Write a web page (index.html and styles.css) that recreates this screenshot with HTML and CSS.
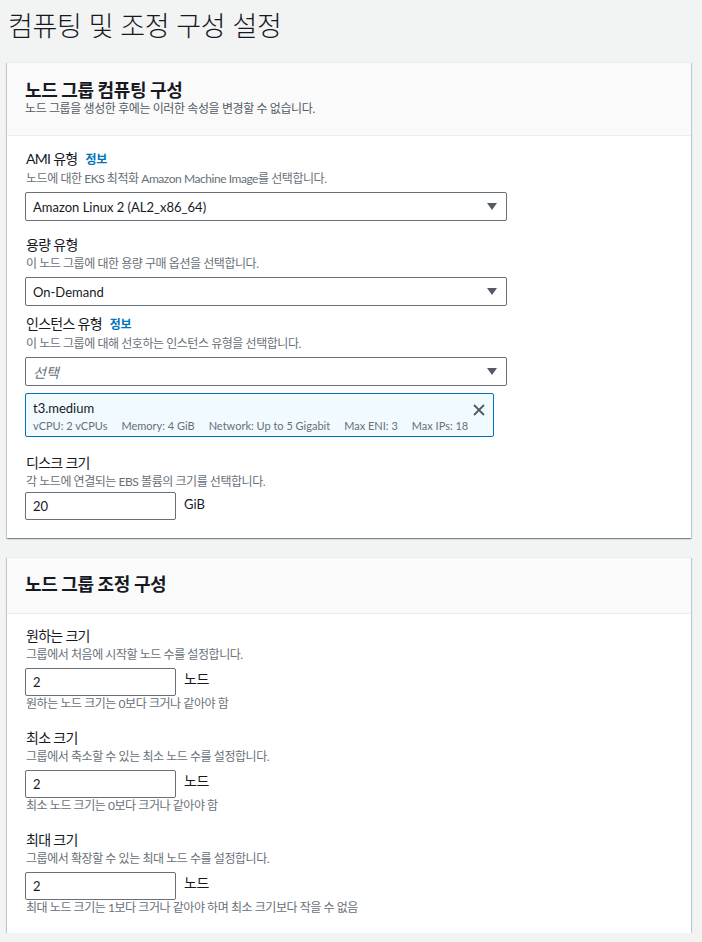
FILE: index.html
```html
<!DOCTYPE html>
<html lang="ko">
<head>
    <meta charset="UTF-8">
    <meta name="viewport" content="width=device-width, initial-scale=1.0">
    <title>컴퓨팅 및 조정 구성 설정</title>
    <link rel="stylesheet" href="styles.css">
</head>
<body>

<div class="page">
    <h1 class="page-title">컴퓨팅 및 조정 구성 설정</h1>

    <!-- Node group compute configuration -->
    <section class="card">
        <div class="card-header">
            <h2>노드 그룹 컴퓨팅 구성</h2>
            <p>노드 그룹을 생성한 후에는 이러한 속성을 변경할 수 없습니다.</p>
        </div>
        <div class="card-body">
            <div class="field">
                <div class="field-label">AMI 유형 <a class="info" href="#">정보</a></div>
                <div class="field-desc">노드에 대한 EKS 최적화 Amazon Machine Image를 선택합니다.</div>
                <div class="select">
                    <span class="select-value">Amazon Linux 2 (AL2_x86_64)</span>
                    <svg class="caret" width="10" height="7" viewBox="0 0 10 7"><path d="M0 0h10L5 7z"/></svg>
                </div>
            </div>

            <div class="field field-capacity">
                <div class="field-label">용량 유형</div>
                <div class="field-desc">이 노드 그룹에 대한 용량 구매 옵션을 선택합니다.</div>
                <div class="select">
                    <span class="select-value">On-Demand</span>
                    <svg class="caret" width="10" height="7" viewBox="0 0 10 7"><path d="M0 0h10L5 7z"/></svg>
                </div>
            </div>

            <div class="field field-instance">
                <div class="field-label">인스턴스 유형 <a class="info" href="#">정보</a></div>
                <div class="field-desc">이 노드 그룹에 대해 선호하는 인스턴스 유형을 선택합니다.</div>
                <div class="select">
                    <span class="select-placeholder">선택</span>
                    <svg class="caret" width="10" height="7" viewBox="0 0 10 7"><path d="M0 0h10L5 7z"/></svg>
                </div>
                <div class="token">
                    <div class="token-main">
                        <div class="token-title">t3.medium</div>
                        <div class="token-tags">
                            <span>vCPU: 2 vCPUs</span>
                            <span>Memory: 4 GiB</span>
                            <span>Network: Up to 5 Gigabit</span>
                            <span>Max ENI: 3</span>
                            <span>Max IPs: 18</span>
                        </div>
                    </div>
                    <svg class="token-close" width="12" height="12" viewBox="0 0 12 12"><path d="M1 1l10 10M11 1L1 11"/></svg>
                </div>
            </div>

            <div class="field field-disk">
                <div class="field-label">디스크 크기</div>
                <div class="field-desc">각 노드에 연결되는 EBS 볼륨의 크기를 선택합니다.</div>
                <div class="input-row input-row-disk">
                    <input class="text-input" type="text" value="20">
                    <span class="unit unit-disk">GiB</span>
                </div>
            </div>
        </div>
    </section>

    <!-- Node group scaling configuration -->
    <section class="card card-scaling">
        <div class="card-header card-header-scaling">
            <h2>노드 그룹 조정 구성</h2>
        </div>
        <div class="card-body card-body-scaling">
            <div class="field">
                <div class="field-label">원하는 크기</div>
                <div class="field-desc">그룹에서 처음에 시작할 노드 수를 설정합니다.</div>
                <div class="input-row">
                    <input class="text-input" type="text" value="2">
                    <span class="unit">노드</span>
                </div>
                <div class="field-hint">원하는 노드 크기는 0보다 크거나 같아야 함</div>
            </div>

            <div class="field field-scale">
                <div class="field-label">최소 크기</div>
                <div class="field-desc">그룹에서 축소할 수 있는 최소 노드 수를 설정합니다.</div>
                <div class="input-row">
                    <input class="text-input" type="text" value="2">
                    <span class="unit">노드</span>
                </div>
                <div class="field-hint">최소 노드 크기는 0보다 크거나 같아야 함</div>
            </div>

            <div class="field field-scale">
                <div class="field-label">최대 크기</div>
                <div class="field-desc">그룹에서 확장할 수 있는 최대 노드 수를 설정합니다.</div>
                <div class="input-row">
                    <input class="text-input" type="text" value="2">
                    <span class="unit">노드</span>
                </div>
                <div class="field-hint">최대 노드 크기는 1보다 크거나 같아야 하며 최소 크기보다 작을 수 없음</div>
            </div>
        </div>
    </section>
</div>

</body>
</html>
```

FILE: styles.css
```css
body {
    font-family: Lato, "Noto Sans CJK KR", sans-serif;
    background-color: #f2f3f3;
    color: #16191f;
    margin: 0;
    padding: 0;
}

.page {
    padding-top: 8px;
    width: 702px;
}

.page-title {
    margin: 0 0 0 8px;
    font-size: 27px;
    font-weight: 300;
    line-height: 36px;
    letter-spacing: -0.3px;
}

.card {
    margin: 18px 0 0 7px;
    width: 684px;
    background-color: #fff;
    border-top: 1px solid #eaeded;
    box-shadow: 0 1px 1px 0 rgba(0, 28, 36, 0.3),
                1px 1px 1px 0 rgba(0, 28, 36, 0.15),
                -1px 1px 1px 0 rgba(0, 28, 36, 0.15);
}

.card-scaling {
    margin-top: 19px;
}

.card-header {
    background-color: #fafafa;
    border-bottom: 1px solid #eaeded;
    padding: 16px 18px 18px;
}

.card-header-scaling {
    padding-top: 15px;
}

.card-header h2 {
    margin: 0;
    font-size: 18px;
    font-weight: 700;
    line-height: 22px;
    letter-spacing: -0.4px;
}

.card-header p {
    margin: 0;
    font-size: 12px;
    line-height: 16px;
    color: #545b64;
    letter-spacing: -0.4px;
}

.card-body {
    padding: 12px 18px 18px;
}

.card-body-scaling {
    padding: 11px 18px 17px;
}

.field-capacity {
    margin-top: 13px;
}

.field-instance {
    margin-top: 7px;
}

.field-disk {
    margin-top: 15px;
}

.field-scale {
    margin-top: 15px;
}

.field-label {
    font-size: 14px;
    line-height: 22px;
    letter-spacing: -0.7px;
    padding-left: 1px;
}

.info {
    font-size: 12px;
    font-weight: 700;
    color: #0073bb;
    text-decoration: none;
    margin-left: 5px;
    letter-spacing: -0.3px;
}

.field-desc,
.field-hint {
    font-size: 12px;
    line-height: 16px;
    color: #687078;
    letter-spacing: -0.45px;
    padding-left: 1px;
}

.select {
    margin-top: 5px;
    width: 482px;
    height: 29px;
    box-sizing: border-box;
    border: 1px solid #687078;
    border-radius: 2px;
    display: flex;
    align-items: center;
    justify-content: space-between;
    padding: 0 9px 0 7px;
    font-size: 13px;
}

.select-placeholder {
    color: #687078;
    font-style: italic;
    font-size: 14px;
}

.caret {
    fill: #545b64;
    flex-shrink: 0;
}

.token {
    margin-top: 7px;
    width: 469px;
    box-sizing: border-box;
    border: 1px solid #0073bb;
    border-radius: 2px;
    background-color: #f1faff;
    padding: 4px 8px 2px 7px;
    display: flex;
    justify-content: space-between;
    align-items: flex-start;
}

.token-main {
    min-width: 0;
}

.token-title {
    font-size: 13px;
    line-height: 20px;
}

.token-tags {
    display: flex;
    gap: 14px;
    white-space: nowrap;
    font-size: 11px;
    line-height: 16px;
    color: #687078;
}

.token-close {
    flex-shrink: 0;
    margin-top: 6px;
    stroke: #545b64;
    stroke-width: 1.8;
    fill: none;
}

.input-row {
    margin-top: 5px;
    display: flex;
    align-items: flex-start;
    gap: 8px;
}

.input-row-disk {
    margin-top: 2px;
}

.text-input {
    width: 151px;
    height: 28px;
    box-sizing: border-box;
    border: 1px solid #687078;
    border-radius: 2px;
    padding: 0 7px;
    font-family: Lato, "Noto Sans CJK KR", sans-serif;
    font-size: 13px;
    color: #16191f;
    background-color: #fff;
    margin: 0;
}

.unit {
    font-size: 14px;
    line-height: 22px;
    letter-spacing: -0.5px;
}

.unit-disk {
    font-size: 13px;
    letter-spacing: 0;
    margin-top: 1px;
}
```
